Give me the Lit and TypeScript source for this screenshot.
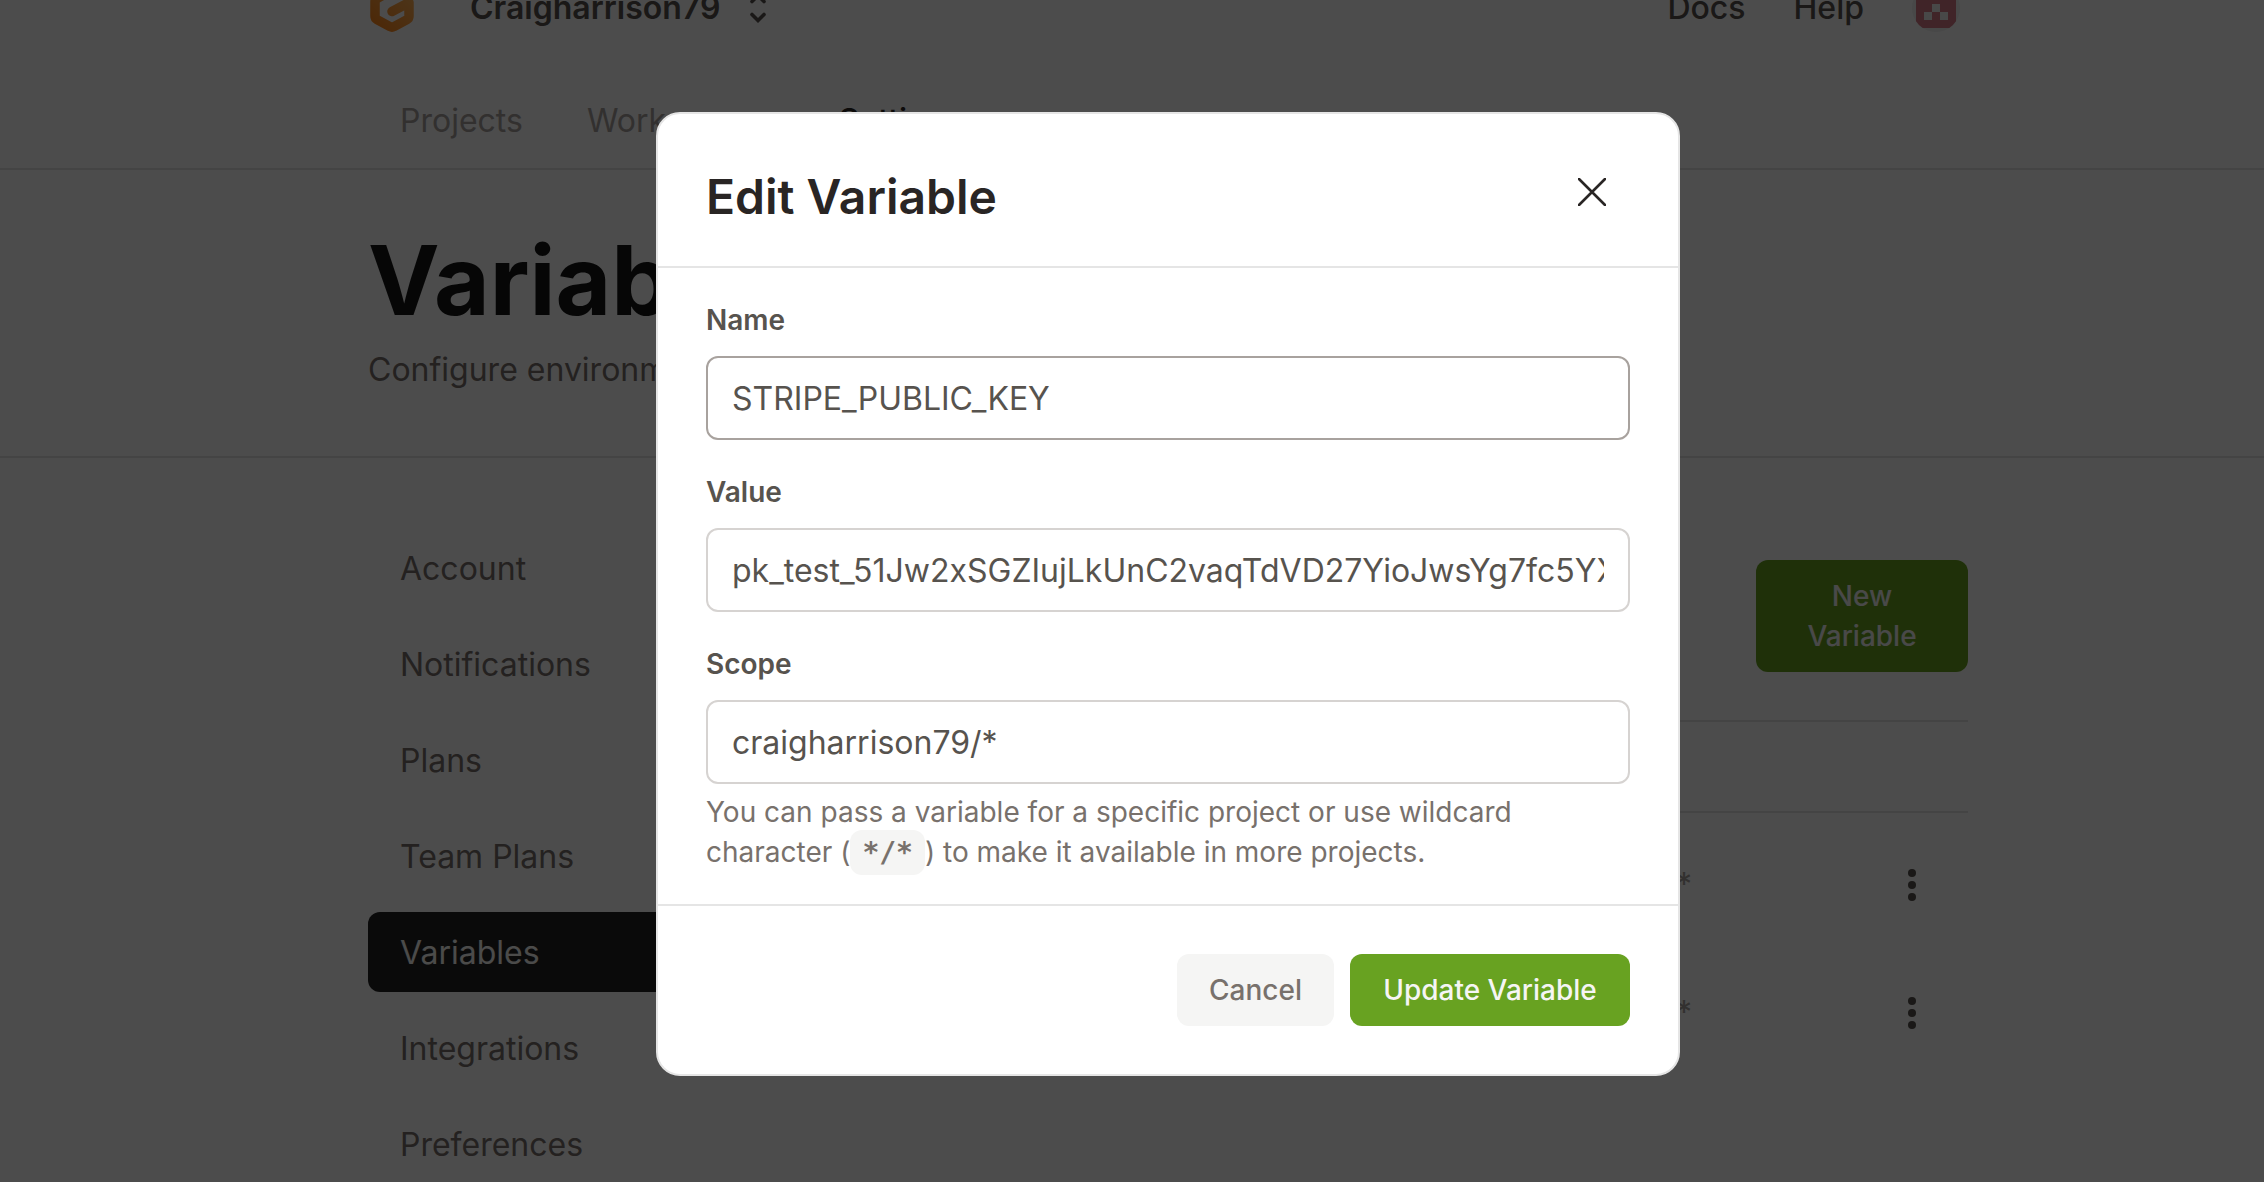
import { LitElement, html, css, svg } from "lit";
import { customElement } from "lit/decorators.js";
import { classMap } from "lit/directives/class-map.js";

const NAV = [
  { label: "Projects", active: false },
  { label: "Workspaces", active: false },
  { label: "Settings", active: true },
];

const SIDEBAR = [
  "Account",
  "Notifications",
  "Plans",
  "Team Plans",
  "Variables",
  "Integrations",
  "Preferences",
];

const SCOPES = ["craigharrison79/*", "craigharrison79/*"];

const logo = html`
  <svg class="logo" viewBox="0 0 44 48" aria-hidden="true">
    <defs>
      <linearGradient id="logo-fill" x1="1" y1="0" x2="0.2" y2="1">
        <stop offset="0" stop-color="#ffb45b" />
        <stop offset="1" stop-color="#ff8a20" />
      </linearGradient>
    </defs>
    <path
      d="M25 4.5 L7 14.5 Q5 15.5 5 18 V32 Q5 34.5 7 35.6 L20 42.6 Q22 43.6 24 42.6 L37 35.6 Q39 34.5 39 32 V18.5 L22 27.5"
      fill="none"
      stroke="url(#logo-fill)"
      stroke-width="9.5"
      stroke-linecap="round"
      stroke-linejoin="round"
    />
  </svg>
`;

const switchIcon = html`
  <svg class="switch-icon" viewBox="0 0 20 32" aria-hidden="true">
    <path
      d="M4 9.5 L10 3.5 L16 9.5 M4 22.5 L10 28.5 L16 22.5"
      fill="none"
      stroke="#57534e"
      stroke-width="3.6"
      stroke-linecap="round"
    />
  </svg>
`;

const AVATAR_GAPS = [
  [20, 20],
  [12, 28],
  [28, 28],
];

const avatar = html`
  <svg class="avatar" viewBox="0 0 48 48" aria-hidden="true">
    <clipPath id="avatar-clip"><circle cx="24" cy="24" r="24" /></clipPath>
    <g clip-path="url(#avatar-clip)">
      <rect width="48" height="48" fill="#f0f0f0" />
      <rect x="4" y="4" width="40" height="40" fill="#d67a86" />
      ${AVATAR_GAPS.map(([x, y]) => svg`<rect x=${x} y=${y} width="8" height="8" fill="#f0f0f0" />`)}
    </g>
  </svg>
`;

const kebab = html`
  <svg class="kebab" viewBox="0 0 8 32" aria-hidden="true">
    <circle cx="4" cy="4" r="4" fill="#57534e" />
    <circle cx="4" cy="16" r="4" fill="#57534e" />
    <circle cx="4" cy="28" r="4" fill="#57534e" />
  </svg>
`;

const base = css`
  *,
  *::before,
  *::after {
    box-sizing: border-box;
  }
  h1,
  h2,
  p {
    margin: 0;
  }
  a {
    color: inherit;
    text-decoration: none;
  }
  button {
    border: 0;
    padding: 0;
    background: none;
    font: inherit;
    color: inherit;
    cursor: pointer;
  }
  .btn {
    padding: 16px 32px;
    border-radius: 12px;
    font-size: 28px;
    line-height: 40px;
    font-weight: 500;
  }
  .btn.primary {
    background: #68a221;
    color: #f5f5f4;
  }
`;

@customElement("settings-page")
export class SettingsPage extends LitElement {
  static styles = [
    base,
    css`
      :host {
        display: block;
        margin-top: -16px;
        font-size: 32px;
        line-height: 42px;
        color: #78716c;
      }
      .divided,
      .main-area {
        padding-left: 72px;
      }
      .container {
        max-width: 1600px;
        margin: 0 auto;
      }
      .topbar {
        display: flex;
        align-items: center;
        height: 48px;
        color: #57534e;
        font-weight: 500;
      }
      .logo {
        width: 44px;
        height: 48px;
        margin-left: 2px;
      }
      .account {
        display: flex;
        align-items: center;
        gap: 28px;
        margin-left: 56px;
        font-weight: 600;
      }
      .switch-icon {
        width: 20px;
        height: 32px;
      }
      .links {
        display: flex;
        align-items: center;
        gap: 48px;
        margin-left: auto;
        margin-right: 8px;
      }
      .avatar {
        display: block;
        width: 48px;
        height: 48px;
      }
      .divided {
        border-bottom: 2px solid #e5e5e5;
      }
      .nav {
        display: flex;
        padding: 68px 0 26px;
        color: #a8a29e;
      }
      .tab {
        padding: 0 32px;
      }
      .tab.active {
        color: #292524;
        font-weight: 500;
      }
      .hero {
        padding: 62px 0 62px;
      }
      h1 {
        margin-bottom: 18px;
        font-size: 96px;
        line-height: 96px;
        font-weight: 700;
        font-optical-sizing: auto;
        color: #171717;
      }
      .lead {
        line-height: 48px;
      }
      .main {
        display: grid;
        grid-template-columns: 384px 1fr;
        gap: 80px;
        padding-top: 70px;
      }
      .side {
        display: flex;
        flex-direction: column;
        gap: 16px;
      }
      .item {
        padding: 20px 32px 18px;
        border-radius: 12px;
      }
      .item.active {
        background: #222222;
        color: #fafaf9;
      }
      .content {
        padding-top: 32px;
      }
      .actions {
        display: flex;
        justify-content: flex-end;
        margin-bottom: 48px;
      }
      .new {
        width: 212px;
      }
      .table {
        width: 100%;
        border-collapse: collapse;
      }
      .table th {
        height: 91px;
        padding: 0;
        border-top: 2px solid #e5e5e5;
        border-bottom: 2px solid #e5e5e5;
        font-weight: 400;
      }
      .table td {
        height: 128px;
        padding: 0;
        color: #a8a29e;
        text-align: right;
      }
      .table td.menu {
        width: 276px;
        padding-right: 52px;
      }
      .rows::before {
        content: "";
        display: block;
        height: 8px;
      }
      .menu button {
        display: block;
        margin-left: auto;
      }
      .kebab {
        display: block;
        width: 8px;
        height: 32px;
      }
    `,
  ];

  render() {
    return html`
      <header class="divided">
        <div class="container">
          <div class="topbar">
            ${logo}
            <button class="account" type="button">Craigharrison79 ${switchIcon}</button>
            <div class="links">
              <a href="#docs">Docs</a>
              <a href="#help">Help</a>
              <button type="button" aria-label="Account menu">${avatar}</button>
            </div>
          </div>
          <nav class="nav">
            ${NAV.map(
              (n) => html`<a class=${classMap({ tab: true, active: n.active })} href="#${n.label}">${n.label}</a>`
            )}
          </nav>
        </div>
      </header>
      <section class="divided">
        <div class="container hero">
          <h1>Variables</h1>
          <p class="lead">Configure environment variables.</p>
        </div>
      </section>
      <div class="main-area">
        <div class="container main">
          <nav class="side">
            ${SIDEBAR.map(
              (s) => html`<a class=${classMap({ item: true, active: s === "Variables" })} href="#${s}">${s}</a>`
            )}
          </nav>
          <section class="content">
            <div class="actions">
              <button class="btn primary new" type="button">New Variable</button>
            </div>
            <table class="table">
              <thead>
                <tr>
                  <th scope="col">Scope</th>
                  <th></th>
                </tr>
              </thead>
              <tbody class="rows">
                ${SCOPES.map(
                  (s) => html`<tr>
                    <td>${s}</td>
                    <td class="menu"><button type="button" aria-label="Options">${kebab}</button></td>
                  </tr>`
                )}
              </tbody>
            </table>
          </section>
        </div>
      </div>
    `;
  }
}

@customElement("variable-dialog")
export class VariableDialog extends LitElement {
  static styles = [
    base,
    css`
      :host {
        display: block;
        width: 100%;
        max-width: 1024px;
      }
      .dialog {
        border: 2px solid #e5e5e5;
        border-radius: 24px;
        background: #ffffff;
        color: #57534e;
        font-size: 28px;
        line-height: 40px;
      }
      .head {
        display: flex;
        align-items: flex-start;
        justify-content: space-between;
        padding: 54px 48px 40px;
        border-bottom: 2px solid #e5e5e5;
      }
      h2 {
        font-size: 48px;
        line-height: 58px;
        font-weight: 600;
        color: #292524;
      }
      .close {
        display: grid;
        place-items: center;
        width: 76px;
        height: 48px;
      }
      .close svg {
        width: 28px;
        height: 28px;
      }
      .body {
        display: flex;
        flex-direction: column;
        gap: 32px;
        padding: 32px 48px;
        border-bottom: 2px solid #e5e5e5;
      }
      .field {
        display: flex;
        flex-direction: column;
      }
      label {
        margin-bottom: 16px;
        font-weight: 600;
      }
      input {
        width: 100%;
        height: 84px;
        padding: 0 24px;
        border: 2px solid #d6d3d1;
        border-radius: 12px;
        outline: none;
        background: #ffffff;
        color: #57534e;
        font-family: inherit;
        font-size: 32px;
      }
      .focused {
        border-color: #a8a29e;
      }
      .hint {
        max-width: 840px;
        margin-top: 8px;
        color: #78716c;
      }
      code {
        padding: 6px 12px;
        border-radius: 12px;
        background: #f5f5f4;
        font-family: "DejaVu Sans Mono", monospace;
        font-size: 28px;
        line-height: 32px;
        font-weight: 700;
      }
      .foot {
        display: flex;
        justify-content: flex-end;
        gap: 16px;
        padding: 48px;
      }
      .submit {
        min-width: 280px;
      }
      .secondary {
        background: #f5f5f4;
        color: #78716c;
      }
    `,
  ];

  render() {
    return html`
      <form class="dialog" role="dialog" aria-labelledby="title" @submit=${(e: Event) => e.preventDefault()}>
        <div class="head">
          <h2 id="title">Edit Variable</h2>
          <button class="close" type="button" aria-label="Close">
            <svg viewBox="0 0 28 28" aria-hidden="true">
              <path d="M1 1 L27 27 M27 1 L1 27" stroke="#292524" stroke-width="2.6" stroke-linecap="round" />
            </svg>
          </button>
        </div>
        <div class="body">
          <div class="field">
            <label for="name">Name</label>
            <input class="focused" id="name" type="text" .value=${"STRIPE_PUBLIC_KEY"} />
          </div>
          <div class="field">
            <label for="value">Value</label>
            <input id="value" type="text" .value=${"pk_test_51Jw2xSGZIujLkUnC2vaqTdVD27YioJwsYg7fc5YX"} />
          </div>
          <div class="field">
            <label for="scope">Scope</label>
            <input id="scope" type="text" .value=${"craigharrison79/*"} />
            <p class="hint">
              You can pass a variable for a specific project or use wildcard character
              (<code>*/*</code>) to make it available in more projects.
            </p>
          </div>
        </div>
        <div class="foot">
          <button class="btn secondary" type="button">Cancel</button>
          <button class="btn primary submit" type="submit">Update Variable</button>
        </div>
      </form>
    `;
  }
}

@customElement("app-root")
export class AppRoot extends LitElement {
  static styles = css`
    :host {
      display: block;
      position: relative;
      height: 100vh;
      overflow: hidden;
      background: #ffffff;
      font-family: Inter, "Liberation Sans", sans-serif;
      font-optical-sizing: none;
    }
    .overlay {
      position: absolute;
      inset: 0;
      display: flex;
      justify-content: center;
      align-items: flex-start;
      padding: 112px 0 0 72px;
      background: rgba(0, 0, 0, 0.7);
    }
  `;

  render() {
    return html`
      <settings-page></settings-page>
      <div class="overlay"><variable-dialog></variable-dialog></div>
    `;
  }
}
